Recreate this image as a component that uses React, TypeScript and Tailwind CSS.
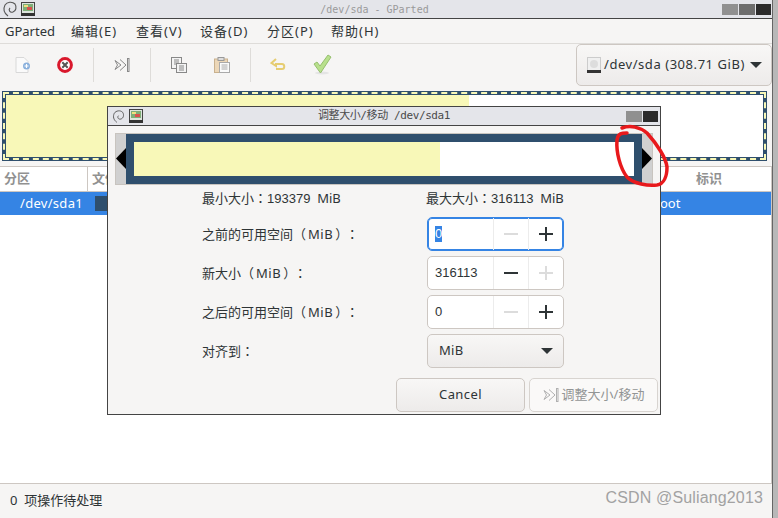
import React from "react";

const sans = "font-['Noto_Sans','Noto_Sans_CJK_SC',sans-serif]";

function Swirl({ s = 18 }: { s?: number }) {
  return (
    <svg width={s} height={s} viewBox="0 0 18 18" fill="none" stroke="#555" strokeWidth="1.1">
      <path d="M7 16C3 13 2 9 4 5C6 2 11 1 14 4C16 7 15 11 12 12C9 13 7 10 9 8" />
    </svg>
  );
}

function AppIcon() {
  return (
    <svg width="14" height="14" viewBox="0 0 14 14">
      <rect x="0.5" y="0.5" width="13" height="11" fill="#dde5dd" stroke="#444" />
      <rect x="2" y="2" width="10" height="7" fill="#7fae78" />
      <path d="M6 5h5v3H6z" fill="#d9534f" />
      <path d="M3 3h4v2H3z" fill="#f0e080" />
      <rect x="0" y="11" width="14" height="3" fill="#333" />
    </svg>
  );
}

function ResizeIcon({ c = "#777", s = 16 }: { c?: string; s?: number }) {
  return (
    <svg width={s} height={s} viewBox="0 0 16 16" fill="none" stroke={c} strokeWidth="1">
      <path d="M1 3.5L7 8L1 12.5L3.5 8Z" />
      <path d="M6 2.5L12 8L6 13.5" />
      <rect x="13.5" y="1.5" width="1.5" height="13" />
    </svg>
  );
}

function Sep() {
  return <div className="w-px h-[34px] bg-[#dedcd9]" />;
}

function Colon() {
  return <span className="font-['Noto_Sans_CJK_TC',sans-serif]">：</span>;
}

function Unit() {
  return (
    <>
      （<span className="px-[2px] tracking-[0.5px]">MiB</span>）<span className="ml-[4px]"><Colon /></span>
    </>
  );
}

function Spin({ value, minus, plus, focus, select }: { value: string; minus?: boolean; plus?: boolean; focus?: boolean; select?: boolean }) {
  const b = focus ? "border-[#3584e4] shadow-[inset_0_0_0_1px_#3584e4]" : "border-[#cdc7c2]";
  return (
    <div className={`flex w-[137px] h-[34px] rounded-[5px] border bg-white ${b}`}>
      <div className="w-[65px] flex items-center pl-[7px] text-[13px] text-[#2e3436] font-['Liberation_Sans',sans-serif]">
        {select ? <span className="bg-[#3584e4] text-white leading-[16px]">{value}</span> : value}
      </div>
      <div className="w-[35px] border-l border-[#ececec] flex items-center justify-center">
        <svg width="14" height="14" viewBox="0 0 14 14"><rect y="6" width="14" height="2" fill={minus ? "#2e3436" : "#dcdcdc"} /></svg>
      </div>
      <div className="flex-1 border-l border-[#ececec] flex items-center justify-center">
        <svg width="14" height="14" viewBox="0 0 14 14"><rect y="6" width="14" height="2" fill={plus ? "#2e3436" : "#dcdcdc"} /><rect x="6" width="2" height="14" fill={plus ? "#2e3436" : "#dcdcdc"} /></svg>
      </div>
    </div>
  );
}

function FormRow({ label, children, top }: { label: React.ReactNode; children: React.ReactNode; top: string }) {
  return (
    <div className={`flex shrink-0 items-center pl-[94px] ${top}`}>
      <div className="w-[225px] text-[13px] text-[#2e3436]">{label}</div>
      {children}
    </div>
  );
}

function SizeLabel({ label, n }: { label: string; n: string }) {
  return (
    <span className="whitespace-pre">
      {label}
      <Colon />
      <span className="font-['Liberation_Sans',sans-serif]">{n}</span>
      {"  "}MiB
    </span>
  );
}

export default function App() {
  return (
    <div className={`relative w-[778px] h-[518px] bg-[#b8b8b8] overflow-hidden flex ${sans}`}>
      <div className="w-[772px] h-[518px] flex flex-col bg-white">
        {/* title bar */}
        <div className="h-[19px] shrink-0 bg-[#e4e5ea] border-b border-[#444] flex items-center pl-[1px]">
          <Swirl />
          <div className="ml-[2px]"><AppIcon /></div>
          <div className="flex-1 text-center text-[10px] text-[#9a9a9a] font-['DejaVu_Sans_Mono',monospace] pr-[8px]">/dev/sda - GParted</div>
          <div className="flex gap-px mr-[1px]">
            <div className="w-[16px] h-[11px] bg-[#909090]" />
            <div className="w-[16px] h-[11px] bg-[#6d6d6d]" />
            <div className="w-[15px] h-[11px] bg-[#2b2b2b]" />
          </div>
        </div>
        {/* menu */}
        <div className="h-[25px] shrink-0 bg-[#f6f5f4] border-b border-[#dedcd9] flex items-center pt-px text-[13px] text-[#2e3436]">
          <span className="ml-[5px] w-[66px]">GParted</span>
          <span className="w-[65px] tracking-[1px]">编辑(E)</span>
          <span className="w-[64px] tracking-[1px]">查看(V)</span>
          <span className="w-[67px] tracking-[1px]">设备(D)</span>
          <span className="w-[64px] tracking-[1px]">分区(P)</span>
          <span className="tracking-[1px]">帮助(H)</span>
        </div>
        {/* toolbar */}
        <div className="h-[47px] shrink-0 bg-[#f6f5f4] flex items-center pb-[5px] relative">
          <div className="w-[93px] flex items-center pl-[15px]">
            <svg width="16" height="16" viewBox="0 0 16 16">
              <path d="M1 0.5H9L13 4.5V15.5H1Z" fill="#fafafa" stroke="#d8d8d8" />
              <circle cx="11.5" cy="9" r="3.5" fill="#8ab0dc" />
              <path d="M9.5 9h4M11.5 7v4" stroke="#fff" strokeWidth="1.2" />
            </svg>
            <div className="ml-[26px]">
              <svg width="16" height="16" viewBox="0 0 16 16">
                <circle cx="8" cy="8" r="6.4" fill="#fff" stroke="#d9182c" strokeWidth="3" />
                <path d="M5.3 5.3L10.7 10.7M10.7 5.3L5.3 10.7" stroke="#555" strokeWidth="2" />
              </svg>
            </div>
          </div>
          <Sep />
          <div className="w-[56px] flex justify-center"><ResizeIcon c="#888" /></div>
          <Sep />
          <div className="w-[99px] flex items-center pl-[20px] gap-[27px]">
            <svg width="16" height="16" viewBox="0 0 16 16" fill="#f4f4f4" stroke="#888">
              <rect x="0.5" y="0.5" width="10" height="11" />
              <path d="M3 3h5M3 5h5M3 7h5" />
              <rect x="5.5" y="6.5" width="10" height="9" />
              <path d="M8 9h5M8 11h5M8 13h5" />
            </svg>
            <svg width="16" height="16" viewBox="0 0 16 16">
              <rect x="0.5" y="2" width="13" height="13.5" fill="#ecd7b8" stroke="#c9b18e" />
              <rect x="4" y="0.5" width="6" height="3" fill="#ddd" stroke="#999" />
              <rect x="5.5" y="5.5" width="10" height="10" fill="#fbfbfb" stroke="#aaa" />
              <path d="M7.5 8h6M7.5 10h6M7.5 12h6" stroke="#aaa" />
            </svg>
          </div>
          <Sep />
          <div className="flex items-center pl-[19px] gap-[24px]">
            <svg width="18" height="16" viewBox="0 0 18 16" fill="none">
              <path d="M6 2L1.5 6L6 9V7H12C15 7 15 12 12 12H6" stroke="#e6cd72" strokeWidth="2" />
            </svg>
            <svg width="20" height="22" viewBox="0 0 20 22">
              <ellipse cx="10" cy="19" rx="7" ry="1.5" fill="#e4e4e4" />
              <path d="M2 10L5 8L8 12L16 1L19 3L8.5 19Z" fill="#b8e08c" stroke="#96bf6e" />
            </svg>
          </div>
          <div className="absolute right-0 top-0 w-[196px] h-[42px] border border-[#cdc7c2] rounded-[5px] bg-gradient-to-b from-[#f8f7f6] to-[#edebea] flex items-center pl-[10px] text-[13px] text-[#2e3436]">
            <svg width="14" height="16" viewBox="0 0 14 16">
              <rect x="0.5" y="0.5" width="13" height="15" fill="#f0f0f0" stroke="#ccc" />
              <circle cx="7" cy="7" r="4" fill="#ddd" />
              <rect x="0" y="13" width="14" height="3" fill="#333" />
            </svg>
            <span className="ml-[3px] tracking-[0.55px]">/dev/sda (308.71 GiB)</span>
            <svg className="ml-[5px]" width="12" height="6" viewBox="0 0 12 6"><path d="M0 0H12L6 6Z" fill="#2e3436" /></svg>
          </div>
        </div>
        {/* disk graph */}
        <div className="h-[75px] shrink-0 bg-[#f6f5f4] pl-[2px] pr-[5px] pb-[5px]">
          <div className="h-full border border-[#2f4f6d]">
            <div className="h-full border-2 border-dashed border-[#f8f8b8] bg-[#2f4f6d]">
              <div className="h-full border border-[#2f4f6d] flex bg-white">
                <div className="w-[463px] bg-[#f8f8b8]" />
              </div>
            </div>
          </div>
        </div>
        {/* table */}
        <div className="flex-1 bg-white flex flex-col border-r border-[#cdc7c2]">
          <div className="h-[26px] shrink-0 border-y border-[#cdc7c2] flex items-center text-[13px] font-bold text-[#919191]">
            <span className="w-[88px] pl-[4px] border-r border-[#cdc7c2] h-full flex items-center">分区</span>
            <span className="pl-[4px]">文件系统</span>
            <span className="ml-auto w-[75px]">标识</span>
          </div>
          <div className="h-[23px] shrink-0 bg-[#3584e4] flex items-center text-[13px] text-white">
            <span className="pl-[20px] w-[95px] tracking-[0.3px]">/dev/sda1</span>
            <span className="w-[14px] h-[15px] bg-[#2f4f6d]" />
            <span className="ml-auto w-[119px]">boot</span>
          </div>
        </div>
        {/* status bar */}
        <div className="h-[35px] shrink-0 bg-[#f6f5f4] border-t border-[#cdc7c2] flex items-center pl-[10px] text-[13px] text-[#2e3436] whitespace-pre">
          {"0  项操作待处理"}
        </div>
      </div>
      <div className="w-px h-full bg-[#666]" />

      <div className="absolute right-[15px] bottom-[8px] text-[16px] text-[#a2a2a2] font-['Liberation_Sans',sans-serif] tracking-[0.15px]">CSDN @Suliang2013</div>

      {/* dialog */}
      <div className="absolute left-[107px] top-[106px] w-[554px] h-[309px] border border-[#444] bg-[#f6f5f4] flex flex-col">
        <div className="h-[19px] shrink-0 bg-[#e4e5ea] border-b border-[#444] flex items-center pl-[3px]">
          <Swirl s={15} />
          <div className="ml-[3px]"><AppIcon /></div>
          <div className="flex-1 text-center text-[11px] text-[#4a4a4a] font-['DejaVu_Sans_Mono','Noto_Sans_CJK_SC',monospace] pr-[1px] tracking-[-0.4px] mt-px">调整大小/移动 /dev/sda1</div>
          <div className="flex gap-px mr-[2px]">
            <div className="w-[16px] h-[11px] bg-[#909090]" />
            <div className="w-[15px] h-[11px] bg-[#2b2b2b]" />
          </div>
        </div>
        {/* resizer */}
        <div className="mt-[7px] mx-[7px] h-[52px] shrink-0 bg-[#d0d0d0] border border-[#c8c4bf] flex">
          <div className="w-[10px] relative">
            <svg className="absolute left-0 top-[14px]" width="10" height="21" viewBox="0 0 10 21"><path d="M10 0V21L0 10.5Z" fill="#000" /></svg>
          </div>
          <div className="w-[516px] border-[8px] border-[#2f4f6d] flex bg-white">
            <div className="w-[306px] bg-[#f8f8b8]" />
          </div>
          <div className="flex-1 relative">
            <svg className="absolute left-0 top-[14px]" width="10" height="21" viewBox="0 0 10 21"><path d="M0 0V21L10 10.5Z" fill="#000" /></svg>
          </div>
        </div>
        {/* labels */}
        <div className="flex shrink-0 pl-[94px] mt-[5px] text-[13px] text-[#2e3436] h-[17px] items-center">
          <span className="w-[224px]"><SizeLabel label="最小大小" n="193379" /></span>
          <SizeLabel label="最大大小" n="316113" />
        </div>
        <FormRow label={<>之前的可用空间<Unit /></>} top="mt-[10px]"><Spin value="0" plus focus select /></FormRow>
        <FormRow label={<>新大小<Unit /></>} top="mt-[5px]"><Spin value="316113" minus /></FormRow>
        <FormRow label={<>之后的可用空间<Unit /></>} top="mt-[5px]"><Spin value="0" plus /></FormRow>
        <FormRow label={<>对齐到<Colon /></>} top="mt-[5px]">
          <div className="w-[137px] h-[34px] rounded-[5px] border border-[#cdc7c2] bg-gradient-to-b from-[#f8f7f6] to-[#edebea] flex items-center pl-[11px] pr-[10px] justify-between text-[13px] text-[#2e3436]">
            <span className="tracking-[0.3px]">MiB</span>
            <svg width="12" height="6" viewBox="0 0 12 6"><path d="M0 0H12L6 6Z" fill="#2e3436" /></svg>
          </div>
        </FormRow>
        <div className="flex shrink-0 justify-end gap-[4px] mt-[10px] pr-[2px]">
          <div className="w-[129px] h-[34px] rounded-[5px] border border-[#cdc7c2] bg-gradient-to-b from-[#f8f7f6] to-[#edebea] flex items-center justify-center text-[13px] text-[#2e3436] tracking-[0.4px]">Cancel</div>
          <div className="w-[129px] h-[34px] rounded-[5px] border border-[#d8d4d0] bg-[#faf9f8] flex items-center justify-center gap-[3px] text-[13px] text-[#929595]">
            <ResizeIcon c="#b0b0b0" />
            <span>调整大小/移动</span>
          </div>
        </div>
      </div>

      {/* red annotation */}
      <svg className="absolute left-[610px] top-[120px]" width="62" height="72" viewBox="0 0 62 72" fill="none">
        <path d="M17 13C12 13 8 13 7 20C6 32 10 48 17 57C24 64 38 66 47 65C54 64 57 56 57 47C56 38 47 24 37 13C30 7 20 5 12 8" stroke="#e8191c" strokeWidth="3.5" strokeLinecap="round" />
      </svg>
    </div>
  );
}
